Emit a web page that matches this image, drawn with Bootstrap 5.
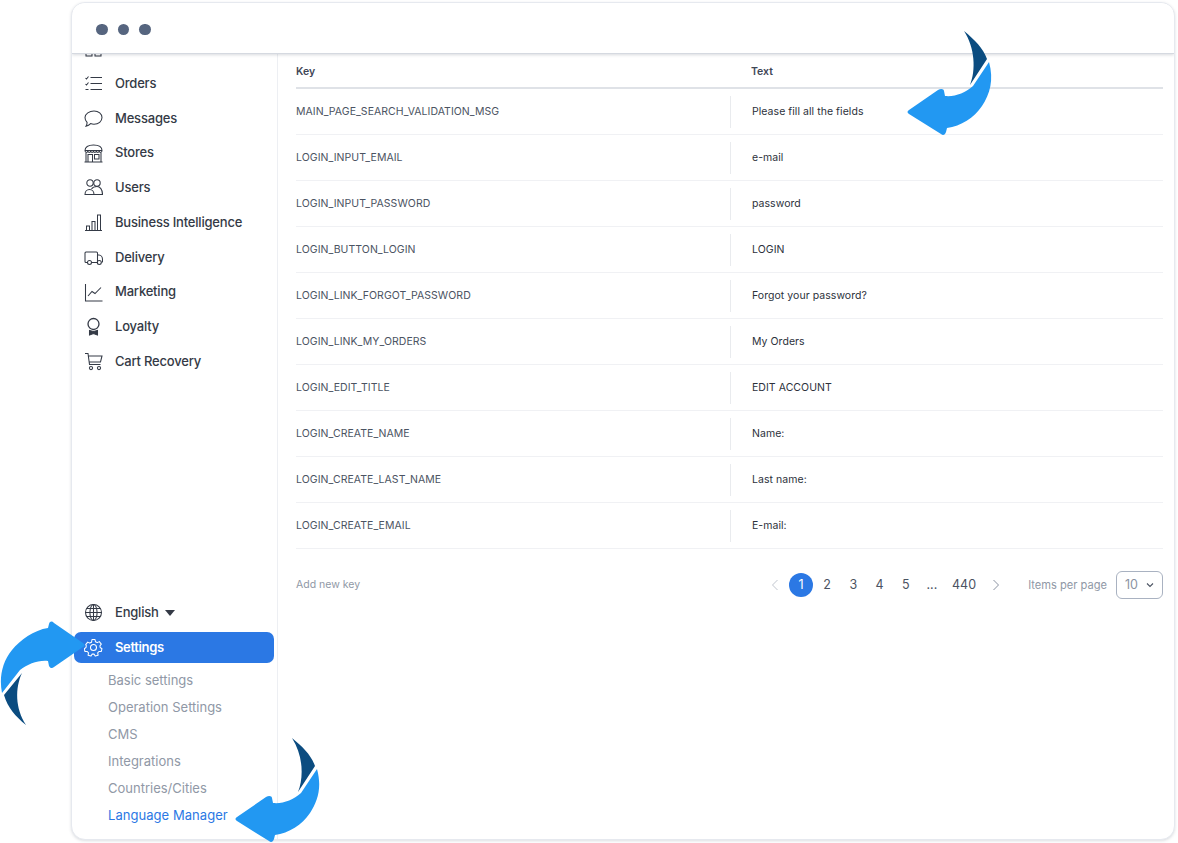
<!DOCTYPE html>
<html lang="en">
<head>
<meta charset="utf-8">
<title>Language Manager</title>
<link href="https://cdn.jsdelivr.net/npm/bootstrap@5.3.0/dist/css/bootstrap.min.css" rel="stylesheet">
<style>
html,body{height:100%}
body{background:#fff;font-family:Inter,"Liberation Sans",sans-serif;color:#343a46;position:relative;overflow:hidden}
.frame{margin:2px 3px 0 71px;height:838px;border:1px solid #e6e9ef;border-radius:14px;box-shadow:0 1px 3px rgba(60,70,90,.18);background:#fff;overflow:hidden}
.topbar{height:51px;flex:none;padding:3px 0 0 24px;gap:10px;background:#fff;border-bottom:1px solid #d5d9e0;box-shadow:0 1px 3px rgba(60,70,90,.2);position:relative;z-index:2}
.dot{width:11.5px;height:11.5px;border-radius:50%;background:#56657f}
.side{width:206px;flex:none;border-right:1px solid #edeff3;padding:0 3px 0 2px;overflow:hidden}
.main-list{margin-top:-22.5px}
.nav-row{height:34.75px;padding-left:10px;gap:12px;font-size:13px;font-weight:500;color:#343a46;letter-spacing:-.2px}
.nav-row svg{width:19px;height:19px;flex:none;fill:none;stroke:#343a46;stroke-width:1.05}
.caret-tri{width:0;height:0;border-left:5px solid transparent;border-right:5px solid transparent;border-top:6px solid #343a46;margin-left:-6px}
.active-row{height:31px;margin-top:2px;border-radius:7px;background:#2b78e4;color:#fff;font-weight:600;letter-spacing:-.35px}
.active-row svg{stroke:#fff}
.sub-list{padding-left:34px;margin-top:4px;margin-bottom:10px}
.sub-row{height:27px;font-size:13px;color:#9098a6}
.sub-row.current{color:#2b78e4;letter-spacing:.05px}
.content{padding:0 11px 0 18px;min-width:0}
.keys{table-layout:fixed;font-size:10.5px;color:#4b5362;margin:0;width:100%}
.keys th{height:34px;padding:2px 0 0;font-size:10.5px;font-weight:600;color:#3f4757;border-bottom:2px solid #dfe2e7;vertical-align:middle;box-shadow:none}
.keys td{height:46px;padding:1px 0 0;border-bottom:1px solid #f0f1f4;vertical-align:middle;box-shadow:none;letter-spacing:.05px}
.col-key{width:434px}
.val{border-left:1px solid #e9ebee;height:32px;padding-left:21px;color:#2c313b}
.head-text{padding-left:21px}
.foot{height:73px;font-size:10.5px;color:#9098a6}
.items-lbl{font-size:11.1px}
.pager{margin-right:19px;color:#4b5362;font-size:12.5px}
.pg{width:26.2px;height:24px}
.pg.on{background:#2b78e4;color:#fff;border-radius:50%;width:24px;margin:0 1px}
.pg.wide{width:38px}
.pg svg{width:8px;height:12px;fill:none;stroke:#8b93a2;stroke-width:1}
.pg.prev svg{stroke:#c1c6cf}
.pick{width:47px;height:28px;margin-left:9px;border:1px solid #a9b2c1;border-radius:6px;font-size:12.5px;padding:0 8px;color:#8b93a2}
.pick svg{width:8px;height:6px;fill:none;stroke:#4b5362;stroke-width:1.1}
.arrow{position:absolute;z-index:5}
</style>
</head>
<body>
<div class="frame d-flex flex-column">
  <div class="topbar d-flex align-items-center">
    <span class="dot"></span><span class="dot"></span><span class="dot"></span>
  </div>
  <div class="d-flex flex-grow-1" style="min-height:0">
    <aside class="side d-flex flex-column">
      <div class="main-list flex-grow-1">
        <div class="nav-row d-flex align-items-center"><svg viewBox="0 0 19 19"><rect x="2" y="2" width="6" height="6"/><rect x="11" y="2" width="6" height="6"/><rect x="2" y="11" width="6" height="6"/><rect x="11" y="11" width="6" height="6"/></svg></div>
        <div class="nav-row d-flex align-items-center"><svg viewBox="0 0 19 19"><path d="M6.500 3.500h11.500M6.500 9.500h11.500M6.500 15.500h11.500M1.500 4l1 1 2-2.500M1.500 10l1 1 2-2.500M1.500 15.500h3" /></svg><span>Orders</span></div>
        <div class="nav-row d-flex align-items-center"><svg viewBox="0 0 19 19"><path d="M10 2c4.600 0 8 2.900 8 6.600s-3.400 6.600-8 6.600c-1.200 0-2.400-.2-3.400-.6-1 1.200-2.600 2.300-4.600 2.600.7-1 1.100-2.200 1.100-3.700C1.800 12.300 1 10.600 1 8.600 1 4.900 5.400 2 10 2z"/></svg><span>Messages</span></div>
        <div class="nav-row d-flex align-items-center"><svg viewBox="0 0 19 19"><path d="M.5 18h18M2 18V9M17 18V9M1 6.500C1 3 4 1 9.500 1S18 3 18 6.500M1 6.500c0 2.600 2.800 2.600 2.800 0 0 2.600 2.800 2.600 2.900 0 0 2.600 2.800 2.600 2.800 0 0 2.600 2.800 2.600 2.900 0 0 2.600 2.800 2.600 2.800 0 0 2.600 2.800 2.600 2.800 0M1 6.500h17M4 18v-7.500h4.500V18M10.500 10.500H15v4.500h-4.500z"/></svg><span>Stores</span></div>
        <div class="nav-row d-flex align-items-center"><svg viewBox="0 0 19 19"><circle cx="6" cy="5" r="3.200"/><circle cx="13" cy="5" r="3.200"/><path d="M1 16.500c0-3 2-5 4.500-5s4.500 2 4.500 5zM7.500 11c1-1.500 3.500-2.500 5.500-2.500 3 0 5.500 3 5.500 8H10"/></svg><span>Users</span></div>
        <div class="nav-row d-flex align-items-center"><svg viewBox="0 0 19 19"><path d="M1 17.500h17M2.500 17v-4h3v4M8 17V8.500h3V17M13.500 17V2h3v15"/></svg><span>Business Intelligence</span></div>
        <div class="nav-row d-flex align-items-center"><svg viewBox="0 0 19 19"><path d="M3.500 14.500H2c-.6 0-1-.4-1-1V5c0-.6.4-1 1-1h10.500c.6 0 1 .4 1 1v9.500H7.500M13.500 7h1.500c1.800 0 3.500 2 3.500 4.500v2c0 .6-.4 1-1 1"/><circle cx="5.500" cy="14.500" r="2"/><circle cx="15.300" cy="14.500" r="2"/></svg><span>Delivery</span></div>
        <div class="nav-row d-flex align-items-center"><svg viewBox="0 0 19 19"><path d="M1.500 1v17h17M4 13l4-4.500 3 2 6-6"/></svg><span>Marketing</span></div>
        <div class="nav-row d-flex align-items-center"><svg viewBox="0 0 19 19"><circle cx="9.500" cy="7" r="5.500" stroke-width="1.300"/><path d="M5.500 13.500l4 1 4-1V18l-4-1.500-4 1.500z" fill="#343a46"/></svg><span>Loyalty</span></div>
        <div class="nav-row d-flex align-items-center"><svg viewBox="0 0 19 19"><path d="M1 1.500h3l1.500 11h11M4.300 4H18l-1.500 6H5.200"/><circle cx="7" cy="16" r="1.600"/><circle cx="15" cy="16" r="1.600"/></svg><span>Cart Recovery</span></div>
      </div>
      <div class="nav-row d-flex align-items-center"><svg viewBox="0 0 19 19"><circle cx="9.500" cy="9.500" r="8"/><ellipse cx="9.500" cy="9.500" rx="3.600" ry="8"/><path d="M9.500 1.500v16M1.500 9.500h16M2.500 5.500h14M2.500 13.500h14"/></svg><span>English</span><span class="caret-tri"></span></div>
      <div class="nav-row active-row d-flex align-items-center"><svg viewBox="0 0 19 19"><circle cx="9.500" cy="9.500" r="3"/><path d="M8 1.500h3l.5 2.300 1.700.8 2.100-1 2 2.500-1.400 1.700.3 1.700 1.800 1.200-.8 2.800-2.300 0-1.200 1.400.4 2.300-2.900.9-1.200-2h-1.800l-1.200 2-2.900-.9.400-2.300-1.200-1.400-2.300 0-.8-2.800 1.800-1.200.3-1.700L1.700 6.600l2-2.500 2.100 1 1.700-.8z" stroke-linejoin="round"/></svg><span>Settings</span></div>
      <div class="sub-list">
        <div class="sub-row d-flex align-items-center">Basic settings</div>
        <div class="sub-row d-flex align-items-center">Operation Settings</div>
        <div class="sub-row d-flex align-items-center">CMS</div>
        <div class="sub-row d-flex align-items-center">Integrations</div>
        <div class="sub-row d-flex align-items-center">Countries/Cities</div>
        <div class="sub-row current d-flex align-items-center">Language Manager</div>
      </div>
    </aside>
    <main class="content flex-grow-1">
      <table class="table keys">
        <colgroup><col class="col-key"><col></colgroup>
        <thead><tr><th>Key</th><th><div class="head-text">Text</div></th></tr></thead>
        <tbody>
          <tr><td>MAIN_PAGE_SEARCH_VALIDATION_MSG</td><td><div class="val d-flex align-items-center">Please fill all the fields</div></td></tr>
          <tr><td>LOGIN_INPUT_EMAIL</td><td><div class="val d-flex align-items-center">e-mail</div></td></tr>
          <tr><td>LOGIN_INPUT_PASSWORD</td><td><div class="val d-flex align-items-center">password</div></td></tr>
          <tr><td>LOGIN_BUTTON_LOGIN</td><td><div class="val d-flex align-items-center">LOGIN</div></td></tr>
          <tr><td>LOGIN_LINK_FORGOT_PASSWORD</td><td><div class="val d-flex align-items-center">Forgot your password?</div></td></tr>
          <tr><td>LOGIN_LINK_MY_ORDERS</td><td><div class="val d-flex align-items-center">My Orders</div></td></tr>
          <tr><td>LOGIN_EDIT_TITLE</td><td><div class="val d-flex align-items-center">EDIT ACCOUNT</div></td></tr>
          <tr><td>LOGIN_CREATE_NAME</td><td><div class="val d-flex align-items-center">Name:</div></td></tr>
          <tr><td>LOGIN_CREATE_LAST_NAME</td><td><div class="val d-flex align-items-center">Last name:</div></td></tr>
          <tr><td>LOGIN_CREATE_EMAIL</td><td><div class="val d-flex align-items-center">E-mail:</div></td></tr>
        </tbody>
      </table>
      <div class="foot d-flex align-items-center">
        <span class="me-auto">Add new key</span>
        <div class="pager d-flex align-items-center">
          <span class="pg prev d-flex align-items-center justify-content-center"><svg viewBox="0 0 8 12"><path d="M6.500 1L1.500 6l5 5"/></svg></span>
          <span class="pg on d-flex align-items-center justify-content-center">1</span>
          <span class="pg d-flex align-items-center justify-content-center">2</span>
          <span class="pg d-flex align-items-center justify-content-center">3</span>
          <span class="pg d-flex align-items-center justify-content-center">4</span>
          <span class="pg d-flex align-items-center justify-content-center">5</span>
          <span class="pg d-flex align-items-center justify-content-center">...</span>
          <span class="pg wide d-flex align-items-center justify-content-center">440</span>
          <span class="pg d-flex align-items-center justify-content-center"><svg viewBox="0 0 8 12"><path d="M1.500 1l5 5-5 5"/></svg></span>
        </div>
        <span class="items-lbl">Items per page</span>
        <div class="pick d-flex align-items-center justify-content-between"><span>10</span><svg viewBox="0 0 8 6"><path d="M1 1.500l3 3 3-3"/></svg></div>
      </div>
    </main>
  </div>
</div>
<svg class="arrow" style="left:905px;top:30px" width="90" height="108" viewBox="0 0 90 108"><path d="M59 1C70 10 78 18 82 29L65 55C71 40 70 18 59 1z" fill="#0b4c80"/><path d="M84 32C89 50 85 64 77 76 69 88 56 96 42 98L41 102C40 105 38 106 36 104L4 84C2 83 2 81 4 80L33 60C36 58 39 59 39 61L40 66C50 67 60 63 68 56z" fill="#2298f2"/></svg>
<svg class="arrow" style="left:0;top:620px" width="92" height="108" viewBox="0 0 92 108"><path d="M26 105C15 96 8 88 4 75L22 53C15 68 15 88 26 105z" fill="#0b4c80"/><path d="M2 73C-1 58 2 42 12 30 20 20 34 10 48 8L49 4C50 1 52 1 54 3L83 23C85 25 85 26 83 27L54 47C52 49 50 48 49 46L48 41C38 40 28 44 20 50z" fill="#2298f2"/></svg>
<svg class="arrow" style="left:233px;top:737px" width="90" height="108" viewBox="0 0 90 108"><path d="M59 1C70 10 78 18 82 29L65 55C71 40 70 18 59 1z" fill="#0b4c80"/><path d="M84 32C89 50 85 64 77 76 69 88 56 96 42 98L41 102C40 105 38 106 36 104L4 84C2 83 2 81 4 80L33 60C36 58 39 59 39 61L40 66C50 67 60 63 68 56z" fill="#2298f2"/></svg>
<script src="https://cdn.jsdelivr.net/npm/bootstrap@5.3.0/dist/js/bootstrap.bundle.min.js"></script>
</body>
</html>
